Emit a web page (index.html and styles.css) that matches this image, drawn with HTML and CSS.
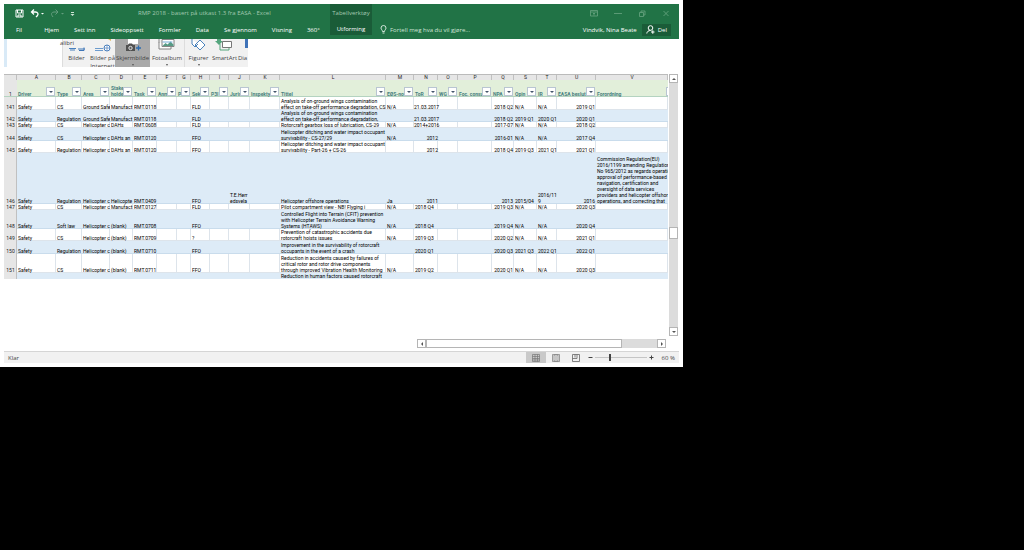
FILE: index.html
```html
<!DOCTYPE html>
<html lang="nb">
<head>
<meta charset="utf-8">
<title>RMP 2018 - basert på utkast 1.3 fra EASA - Excel</title>
<link rel="stylesheet" href="styles.css">
</head>
<body>
<div class="window">
  <header class="top">
    <div class="top-left">
      <div class="title-row">
        <div class="quick">
          <button aria-label="Lagre"><svg width="9" height="9" viewBox="0 0 9 9"><path d="M1 1h7v7H1z M2.5 1v3h4V1 M3 8V6h3v2" fill="none" stroke="#fff"/></svg></button>
          <button aria-label="Angre"><svg width="14" height="9" viewBox="0 0 14 9"><path d="M4 .5L1.500 3 4 5.500M2 3h3.500C8 3 8.500 5 7.500 6.500L6 8" fill="none" stroke="#fff" stroke-width="1.300"/><path d="M11 4h3l-1.500 1.500z" fill="#fff"/></svg></button>
          <button class="dim" aria-label="Gjør om"><svg width="14" height="9" viewBox="0 0 14 9"><path d="M5.500 .5L8 3 5.500 5.500M7.500 3H4C1.500 3 1 5 2 6.500L3 8" fill="none" stroke="#fff"/><path d="M11 4h3l-1.500 1.500z" fill="#fff"/></svg></button>
          <button aria-label="Tilpass"><svg width="5" height="9" viewBox="0 0 5 9"><path d="M1 3.500h3" stroke="#cfe3d6"/><path d="M.5 5h4L2.500 7z" fill="#cfe3d6"/></svg></button>
        </div>
        <span class="doc-title">RMP 2018 - basert på utkast 1.3 fra EASA - Excel</span>
      </div>
      <nav class="tabs">
        <button class="file">Fil</button><button>Hjem</button><button>Sett inn</button><button>Sideoppsett</button><button>Formler</button><button>Data</button><button>Se gjennom</button><button>Visning</button><button>360°</button>
      </nav>
    </div>
    <div class="context"><span>Tabellverktøy</span><button>Utforming</button></div>
    <div class="top-right">
      <div class="controls">
        <button aria-label="Visningsalternativer for båndet"><svg width="8" height="7" viewBox="0 0 8 7"><path d="M.5 .5h7v5.500h-7zM.5 2h7M4 5.500V3M3 4l1-1 1 1" fill="none" stroke="#69a581" stroke-width=".8"/></svg></button>
        <button aria-label="Minimer"><svg width="8" height="7" viewBox="0 0 8 7"><path d="M0 3.500h8" stroke="#69a581" stroke-width=".8"/></svg></button>
        <button aria-label="Gjenopprett"><svg width="8" height="7" viewBox="0 0 8 7"><path d="M1.500 2.500h4v4h-4zM3 2.500V1h4v4H5.500" fill="none" stroke="#69a581" stroke-width=".8"/></svg></button>
        <button aria-label="Lukk"><svg width="8" height="7" viewBox="0 0 8 7"><path d="M1.500 1l5 5M6.500 1l-5 5" stroke="#69a581" stroke-width=".8"/></svg></button>
      </div>
      <div class="account">
        <button class="tell"><svg width="7" height="9" viewBox="0 0 7 9"><path d="M2.500 6.500C2.500 5 1 4.500 1 3a2.500 2.500 0 0 1 5 0c0 1.500-1.500 2-1.500 3.500zM2.500 8h2" fill="none" stroke="#e4f0e8" stroke-width=".9"/></svg>Fortell meg hva du vil gjøre...</button>
        <span class="user">Vindvik, Nina Beate</span>
        <button class="share"><svg width="9" height="9" viewBox="0 0 9 9"><circle cx="4.500" cy="3" r="2.300" fill="none" stroke="#fff"/><path d="M.8 8.500C1 6.500 2.500 5.500 4.500 5.500M5 7h3.500M6.800 5.300v3.500" fill="none" stroke="#fff"/></svg>Del</button>
      </div>
    </div>
  </header>

  <section class="ribbon" aria-label="Sett inn">
    <div class="font-rest"><span>alibri</span></div>
    <button class="tool pics"><svg width="20" height="13" viewBox="0 0 20 13"><path d="M2 9.500h7M3 11h5" stroke="#4a80bd"/><path d="M11 10h7M12 11.500h5M17 8.500v3" stroke="#3f76b7" fill="none"/></svg><span>Bilder</span></button>
    <button class="tool online"><svg width="20" height="13" viewBox="0 0 20 13"><path d="M2 9.500h8M2 11.500h8" stroke="#6c9bcd"/><circle cx="14" cy="9" r="3" fill="#fff" stroke="#4a80bd"/><path d="M11 9h6M14 6v6" stroke="#4a80bd" stroke-width=".7"/><path d="M15 0l3 2V0z" fill="#deb65b"/></svg><span>Bilder på<br>Internett</span></button>
    <button class="tool shot"><svg width="20" height="13" viewBox="0 0 20 13"><path d="M5 0h10v5H5z" fill="#fff"/><path d="M3 6h2l1-1.500h3L10 6h2v6H3z" fill="#505050"/><circle cx="7.500" cy="9" r="1.700" fill="#606060" stroke="#fff" stroke-width=".8"/><path d="M13 9h5M15.500 6.500v5" stroke="#2e6cae" stroke-width="1.300"/></svg><span>Skjermbilde</span><i></i></button>
    <button class="tool album"><svg width="20" height="13" viewBox="0 0 20 13"><path d="M2 3.500V0M5 .5h12v7H5zM2 3v7h12V8" fill="#fff" stroke="#777" stroke-width=".9"/><path d="M5.500 7l3-3 2 1.500 3-3 3 3v1.500z" fill="#579b85"/><path d="M5.500 3h10" stroke="#77add8"/></svg><span>Fotoalbum</span><i></i></button>
    <button class="tool figs"><svg width="20" height="13" viewBox="0 0 20 13"><path d="M3 0v5l3 3 3-3M11 1l5 5-5 5-5-5z" fill="#fff" stroke="#4b83bd"/></svg><span>Figurer</span><i></i></button>
    <button class="tool smart"><svg width="20" height="13" viewBox="0 0 20 13"><path d="M2 0v2H0l4 4 4-4H6V0z" fill="#54a57d"/><path d="M7.500 2.500h9v6h-9z" fill="#fff" stroke="#777"/><path d="M5 5v6h9V9" fill="none" stroke="#54a57d"/></svg><span>SmartArt</span></button>
    <button class="tool chart"><svg width="10" height="13" viewBox="0 0 10 13"><path d="M7 0h3v9H7z" fill="#3f73b8"/></svg><span>Dia</span></button>
  </section>

  <main class="sheet-area">
    <div class="sheet">
      <table>
        <colgroup><col class="c-n"><col class="c-a"><col class="c-b"><col class="c-c"><col class="c-d"><col class="c-e"><col class="c-f"><col class="c-g"><col class="c-h"><col class="c-h"><col class="c-j"><col class="c-k"><col class="c-l"><col class="c-c"><col class="c-e"><col class="c-f"><col class="c-p"><col class="c-q"><col class="c-d"><col class="c-f"><col class="c-a"><col></colgroup>
        <thead>
          <tr class="letters"><th></th><th>A</th><th>B</th><th>C</th><th>D</th><th>E</th><th>F</th><th>G</th><th>H</th><th>I</th><th>J</th><th>K</th><th>L</th><th>M</th><th>N</th><th>O</th><th>P</th><th>Q</th><th>S</th><th>T</th><th>U</th><th>V</th></tr>
          <tr class="fields"><th>1</th><th>Driver<button aria-label="Filter"></button></th><th>Type<button aria-label="Filter"></button></th><th>Area<button aria-label="Filter"></button></th><th>Stake-<br>holde<button aria-label="Filter"></button></th><th>Task<button aria-label="Filter"></button></th><th>Anm<button aria-label="Filter"></button></th><th>P<button aria-label="Filter"></button></th><th>Sek<button aria-label="Filter"></button></th><th>P3I<button aria-label="Filter"></button></th><th>Juris<button aria-label="Filter"></button></th><th>Inspekty<button aria-label="Filter"></button></th><th>Tittel<button aria-label="Filter"></button></th><th>EØS-not<button aria-label="Filter"></button></th><th>ToR<button aria-label="Filter"></button></th><th>WG<button aria-label="Filter"></button></th><th>Foc. consu<button aria-label="Filter"></button></th><th>NPA<button aria-label="Filter"></button></th><th>Opin<button aria-label="Filter"></button></th><th>IR<button aria-label="Filter"></button></th><th>EASA beslut<button aria-label="Filter"></button></th><th class="cut">Forordning<button aria-label="Filter"></button></th></tr>
        </thead>
        <tbody>
          <tr class="h13"><th>141</th><td>Safety</td><td>CS</td><td>Ground Safe</td><td>Manufact</td><td>RMT.0118</td><td></td><td></td><td>FLD</td><td></td><td></td><td></td><td>Analysis of on-ground wings contamination<br>effect on take-off performance degradation, CS</td><td>N/A</td><td class="r">21.03.2017</td><td></td><td></td><td class="r">2018 Q2</td><td>N/A</td><td>N/A</td><td class="r">2019 Q1</td><td></td></tr>
          <tr class="h12 band"><th>142</th><td>Safety</td><td>Regulation</td><td>Ground Safe</td><td>Manufact</td><td>RMT.0118</td><td></td><td></td><td>FLD</td><td></td><td></td><td></td><td>Analysis of on-ground wings contamination<br>effect on take-off performance degradation,</td><td></td><td class="r">21.03.2017</td><td></td><td></td><td class="r">2018 Q2</td><td>2019 Q1</td><td>2020 Q1</td><td class="r">2020 Q1</td><td></td></tr>
          <tr class="h6"><th>143</th><td>Safety</td><td>CS</td><td>Helicopter c</td><td>DAHs</td><td>RMT.0608</td><td></td><td></td><td>FLD</td><td></td><td></td><td></td><td>Rotorcraft gearbox loss of lubrication, CS-29</td><td>N/A</td><td class="r">2014+2016</td><td></td><td></td><td class="r">2017-07</td><td>N/A</td><td>N/A</td><td class="r">2018 Q2</td><td></td></tr>
          <tr class="h13 band"><th>144</th><td>Safety</td><td>CS</td><td>Helicopter c</td><td>DAHs an</td><td>RMT.0120</td><td></td><td></td><td>FFO</td><td></td><td></td><td></td><td>Helicopter ditching and water impact occupant<br>survivability - CS-27/29</td><td>N/A</td><td class="r">2012</td><td></td><td></td><td class="r">2016-01</td><td>N/A</td><td>N/A</td><td class="r">2017 Q4</td><td></td></tr>
          <tr class="h12"><th>145</th><td>Safety</td><td>Regulation</td><td>Helicopter c</td><td>DAHs an</td><td>RMT.0120</td><td></td><td></td><td>FFO</td><td></td><td></td><td></td><td>Helicopter ditching and water impact occupant<br>survivability - Part-26 + CS-26</td><td></td><td class="r">2012</td><td></td><td></td><td class="r">2018 Q4</td><td>2019 Q3</td><td>2021 Q1</td><td class="r">2021 Q1</td><td></td></tr>
          <tr class="h51 band"><th>146</th><td>Safety</td><td>Regulation</td><td>Helicopter c</td><td>Helicopte</td><td>RMT.0409</td><td></td><td></td><td>FFO</td><td></td><td>T.E.Herr<br>edsvela</td><td></td><td>Helicopter offshore operations</td><td>Ja</td><td class="r">2011</td><td></td><td></td><td class="r">2013</td><td>2015/04</td><td>2016/119<br>9</td><td class="r">2016</td><td>Commission Regulation(EU)<br>2016/1199 amending Regulation (I<br>No 965/2012 as regards operatio<br>approval of performance-based<br>navigation, certification and<br>oversight of data services<br>providers and helicopter offshor<br>operations, and correcting that</td></tr>
          <tr class="h6"><th>147</th><td>Safety</td><td>CS</td><td>Helicopter c</td><td>Manufact</td><td>RMT.0127</td><td></td><td></td><td>FLD</td><td></td><td></td><td></td><td>Pilot compartment view - NB! Flyging i</td><td>N/A</td><td>2018 Q4</td><td></td><td></td><td class="r">2019 Q3</td><td>N/A</td><td>N/A</td><td class="r">2020 Q3</td><td></td></tr>
          <tr class="h19 band"><th>148</th><td>Safety</td><td>Soft law</td><td>Helicopter c</td><td>(blank)</td><td>RMT.0708</td><td></td><td></td><td>FFO</td><td></td><td></td><td></td><td>Controlled Flight into Terrain (CFIT) prevention<br>with Helicopter Terrain Avoidance Warning<br>Systems (HTAWS)</td><td>N/A</td><td>2018 Q4</td><td></td><td></td><td class="r">2019 Q4</td><td>N/A</td><td>N/A</td><td class="r">2020 Q4</td><td></td></tr>
          <tr class="h12"><th>149</th><td>Safety</td><td>CS</td><td>Helicopter c</td><td>(blank)</td><td>RMT.0709</td><td></td><td></td><td>?</td><td></td><td></td><td></td><td>Prevention of catastrophic accidents due<br>rotorcraft hoists issues</td><td>N/A</td><td>2019 Q3</td><td></td><td></td><td class="r">2020 Q2</td><td>N/A</td><td>N/A</td><td class="r">2021 Q1</td><td></td></tr>
          <tr class="h13 band"><th>150</th><td>Safety</td><td>Regulation</td><td>Helicopter c</td><td>(blank)</td><td>RMT.0710</td><td></td><td></td><td>FFO</td><td></td><td></td><td></td><td>Improvement in the survivability of rotorcraft<br>occupants in the event of a crash</td><td></td><td>2020 Q1</td><td></td><td></td><td class="r">2020 Q3</td><td>2021 Q3</td><td>2022 Q1</td><td class="r">2022 Q1</td><td></td></tr>
          <tr class="h19"><th>151</th><td>Safety</td><td>CS</td><td>Helicopter c</td><td>(blank)</td><td>RMT.0711</td><td></td><td></td><td>FFO</td><td></td><td></td><td></td><td>Reduction in accidents caused by failures of<br>critical rotor and rotor drive components<br>through improved Vibration Health Monitoring</td><td>N/A</td><td>2019 Q2</td><td></td><td></td><td class="r">2020 Q1</td><td>N/A</td><td>N/A</td><td class="r">2020 Q3</td><td></td></tr>
          <tr class="h6 band"><th></th><td></td><td></td><td></td><td></td><td></td><td></td><td></td><td></td><td></td><td></td><td></td><td>Reduction in human factors caused rotorcraft</td><td></td><td></td><td></td><td></td><td></td><td></td><td></td><td></td><td></td></tr>
        </tbody>
      </table>
    </div>
    <div class="vscroll">
      <button class="arrow up" aria-label="Rull opp"></button>
      <div class="vtrack"><div class="vthumb"></div></div>
      <button class="arrow down" aria-label="Rull ned"></button>
    </div>
  </main>

  <div class="hscroll">
    <button class="arrow left" aria-label="Rull til venstre"></button>
    <div class="htrack"><div class="hthumb"></div></div>
    <button class="arrow right" aria-label="Rull til høyre"></button>
  </div>

  <footer class="status">
    <span class="ready">Klar</span>
    <button class="view on" aria-label="Normal"><svg width="8" height="8" viewBox="0 0 8 8"><path d="M.5 .5h7v7h-7zM.5 2.500h7M.5 4.500h7M.5 6h7M3 .5v7M5.500 .5v7" fill="none" stroke="#777" stroke-width=".7"/></svg></button>
    <button class="view" aria-label="Sideoppsett"><svg width="8" height="8" viewBox="0 0 8 8"><path d="M.5 .5h7v7h-7zM2 1v6h4V1zM3 3h2M3 5h2" fill="none" stroke="#777" stroke-width=".7"/></svg></button>
    <button class="view" aria-label="Sideskift"><svg width="8" height="8" viewBox="0 0 8 8"><path d="M.5 .5h7v7h-7zM.5 4.500H5V.5M3 .5v3" fill="none" stroke="#666" stroke-width=".8"/></svg></button>
    <button class="zoom-btn" aria-label="Zoom ut"><svg width="5" height="5" viewBox="0 0 5 5"><path d="M.5 2.500h4" stroke="#444"/></svg></button>
    <input class="zoom" type="range" min="0" max="100" value="28" aria-label="Zoom">
    <button class="zoom-btn" aria-label="Zoom inn"><svg width="5" height="5" viewBox="0 0 5 5"><path d="M.5 2.500h4M2.500 .5v4" stroke="#444"/></svg></button>
    <span class="percent">60 %</span>
  </footer>
</div>
</body>
</html>
```
FILE: styles.css
```css
* { box-sizing: border-box; }
body { margin: 0; background: #000; font: 6px/8px "Open Sans", "Noto Sans", sans-serif; color: #444; }
button { margin: 0; padding: 0; border: 0; background: none; color: inherit; font: inherit; white-space: nowrap; }
svg { display: block; flex: none; }
.window { width: 66.7%; min-width: 683px; padding: 4px; background: #fff; }

.top { display: flex; height: 35px; background: #217346; color: #fff; }
.top-left { width: 326px; }
.title-row { display: flex; align-items: center; height: 18px; padding-left: 11px; }
.quick { display: flex; align-items: center; gap: 6px; width: 123px; }
.quick .dim { opacity: .3; }
.doc-title { color: #a3c9b1; white-space: nowrap; }
.tabs { display: flex; gap: 15px; height: 15px; padding-left: 12px; align-items: center; }
.tabs .file { margin-right: 7px; }
.context { display: flex; flex-direction: column; width: 42px; height: 31px; background: #1a5c38; text-align: center; color: #a3c9b1; }
.context span { line-height: 18px; }
.context button { color: #fff; line-height: 14px; }
.top-right { flex: 1; }
.controls { display: flex; justify-content: flex-end; align-items: center; gap: 16px; height: 18px; padding-right: 9px; }
.account { display: flex; align-items: center; height: 15px; padding: 0 8px; }
.tell { display: flex; align-items: center; gap: 3px; color: #cfe3d6; }
.user { margin-left: auto; margin-right: 5px; }
.share { display: flex; align-items: center; gap: 3px; height: 12px; padding: 0 4px; background: #1a5c38; }

.ribbon { display: flex; width: 244px; height: 28px; overflow: hidden; background: #f1f1f1; color: #444; }
.font-rest { width: 59px; border-left: 3px solid #d9eaf7; background: #fff; border-right: 1px solid #ddd; text-align: right; }
.font-rest span { position: relative; right: -12px; color: #444; }
.tool { display: flex; flex-direction: column; align-items: center; flex: none; line-height: 8px; }
.tool svg { height: 13px; margin-bottom: 2px; }
.tool i { margin-top: 2px; border: 1px solid transparent; border-top: 2px solid #555; }
.pics { width: 27px; }
.online { width: 25px; }
.shot { width: 35px; background: #a9a9a9; }
.album { width: 35px; border-right: 1px solid #ddd; }
.figs { width: 27px; }
.smart { width: 25px; }
.chart { width: 11px; }

.sheet-area { display: flex; height: 262px; margin-top: 7px; }
.sheet { flex: 1; overflow: hidden; }
table { width: 100%; table-layout: fixed; border-collapse: separate; border-spacing: 0; font: 5px/6px Roboto, "Liberation Sans", sans-serif; color: #000; }
th, td { padding: 0 0 0 1px; overflow: hidden; white-space: nowrap; vertical-align: bottom; text-align: left; box-shadow: inset -1px -1px #dde4eb; }
td.r { padding: 0 1px 0 0; text-align: right; }
td:nth-child(6), td:nth-child(15) { overflow: visible; }
td.r:nth-child(15) { padding: 0; }
.band td { background: #ddebf7; box-shadow: inset 0 -1px #c9dcec; }
.band:last-child td { box-shadow: none; }
tbody th, .letters th { padding: 0; background: #e6e6e6; text-align: center; font-weight: 400; box-shadow: inset -1px 0 #c0c0c0; color: #222; }
.letters th { height: 6px; border-top: 1px solid #bbb; line-height: 5px; }
.fields th { position: relative; height: 17px; background: #e2efda; color: #47807f; box-shadow: inset 0 -1px #b4d3c0; }
.fields th:first-child { padding: 0; background: #e6e6e6; color: #222; text-align: center; font-weight: 400; }
.fields button { position: absolute; right: 1px; bottom: 1px; display: flex; align-items: center; justify-content: center; width: 9px; height: 9px; border: 1px solid #b9c5d2; background: #fff; }
.fields button::before { content: ""; border: 2px solid transparent; border-top-color: #44546a; border-bottom: 0; }
.fields .cut button { right: -7px; }
.c-n { width: 13px; } .c-a { width: 39px; } .c-b { width: 26px; } .c-c { width: 28px; } .c-d { width: 23px; } .c-e { width: 24px; }
.c-f { width: 20px; } .c-g { width: 14px; } .c-h { width: 19px; } .c-j { width: 21px; } .c-k { width: 30px; } .c-l { width: 106px; }
.c-p { width: 34px; } .c-q { width: 22px; }
.h6 td { height: 6px; } .h12 td { height: 12px; } .h13 td { height: 13px; } .h19 td { height: 19px; } .h51 td { height: 51px; }

.arrow { flex: none; display: flex; align-items: center; justify-content: center; width: 9px; height: 9px; border: 1px solid #b5b5b5; background: #fff; }
.arrow::before { content: ""; border: 2px solid transparent; }
.up::before { border-bottom-color: #555; border-top: 0; }
.down::before { border-top-color: #555; border-bottom: 0; }
.left::before { border-right-color: #555; border-left: 0; }
.right::before { border-left-color: #555; border-right: 0; }
.vscroll { display: flex; flex-direction: column; width: 11px; padding-left: 1px; }
.vtrack { flex: 1; width: 9px; padding-top: 144px; background: #dcdcdc; }
.vthumb { height: 12px; border: 1px solid #b5b5b5; background: #fff; }
.hscroll { display: flex; width: 249px; margin: 3px 13px 0 auto; }
.htrack { flex: 1; background: #dcdcdc; }
.hthumb { width: 85%; height: 9px; border: 1px solid #b5b5b5; background: #fff; }

.status { display: flex; align-items: center; height: 12px; margin-top: 3px; padding: 0 4px; border-top: 1px solid #d5d5d5; background: #f1f1f1; }
.ready { margin-right: auto; }
.view { display: flex; align-items: center; justify-content: center; width: 20px; height: 11px; }
.view.on { background: #c9c9c9; }
.zoom-btn { margin: 0 2px; }
.zoom { appearance: none; width: 52px; height: 9px; margin: 0; background: linear-gradient(#c5c5c5, #c5c5c5) center / 100% 1px no-repeat; }
.zoom::-webkit-slider-thumb { appearance: none; width: 2px; height: 7px; background: #444; }
.percent { width: 19px; text-align: right; }
```
